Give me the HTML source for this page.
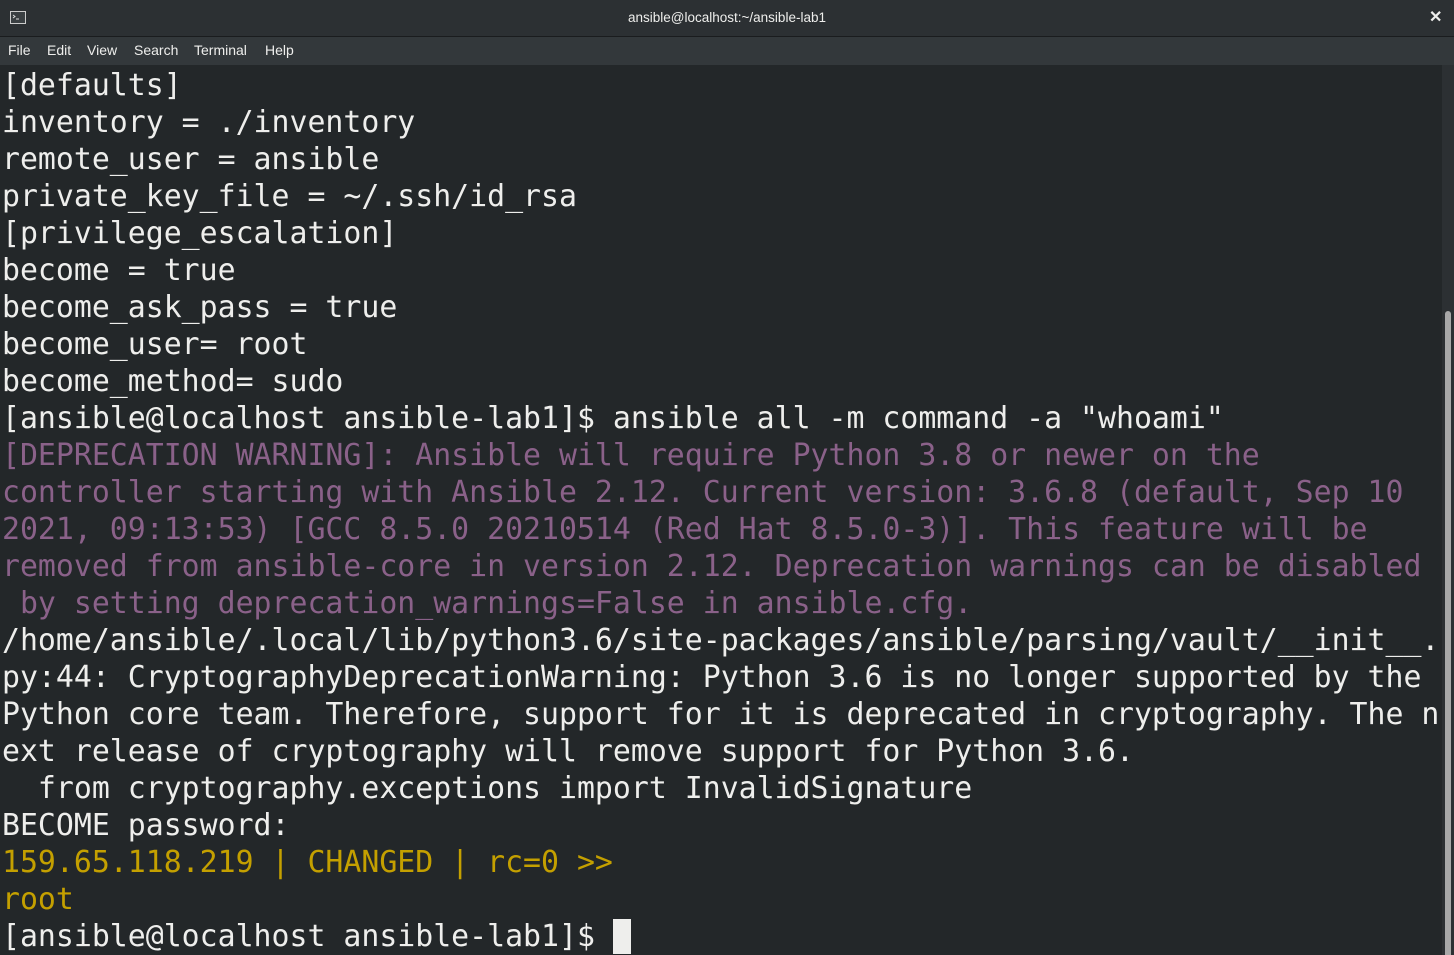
<!DOCTYPE html>
<html><head><meta charset="utf-8"><style>
html,body{margin:0;padding:0;width:1454px;height:955px;overflow:hidden;background:#232729;}
#title{position:absolute;left:0;top:0;width:1454px;height:36px;background:#2c3033;border-bottom:1px solid #1a1c1e;color:#eeeeec;font:13.5px "Liberation Sans",sans-serif;text-align:center;line-height:35px;}
#menu{position:absolute;left:0;top:37px;width:1454px;height:28px;background:#33383b;color:#eeeeec;font:14px "Liberation Sans",sans-serif;line-height:27px;}
#menu span{position:absolute;}
#term{position:absolute;left:2px;top:67px;width:1440px;font-family:"DejaVu Sans Mono",monospace;font-size:29.85px;line-height:37px;color:#eeeeec;white-space:pre;}
.p{color:#8a6189}.y{color:#c4a000}
#sb{position:absolute;left:1442px;top:65px;width:12px;height:890px;background:#2c3033;}
#thumb{position:absolute;left:1445px;top:311px;width:6px;height:644px;background:#a8a8a8;border-radius:3px 3px 0 0;}
#cur{display:inline-block;width:18px;height:35px;background:#eeeeec;vertical-align:top;margin-top:1px;}
</style></head><body>
<div id="title">ansible@localhost:~/ansible-lab1
<svg style="position:absolute;left:10px;top:11px" width="16" height="13" viewBox="0 0 16 13"><rect x="0.5" y="0.5" width="15" height="12" fill="#3a3f42" stroke="#ccc"/><path d="M3 4l2 1.5L3 7M6 8h3" stroke="#ddd" fill="none"/></svg>
<span style="position:absolute;left:1429px;top:0;font-size:16px;font-weight:bold">✕</span></div>
<div id="menu"><span style="left:8px">File</span><span style="left:47px">Edit</span><span style="left:87px">View</span><span style="left:134px">Search</span><span style="left:194px">Terminal</span><span style="left:265px">Help</span></div>
<div id="term">[defaults]
inventory = ./inventory
remote_user = ansible
private_key_file = ~/.ssh/id_rsa
[privilege_escalation]
become = true
become_ask_pass = true
become_user= root
become_method= sudo
[ansible@localhost ansible-lab1]$ ansible all -m command -a "whoami"
<span class="p">[DEPRECATION WARNING]: Ansible will require Python 3.8 or newer on the
controller starting with Ansible 2.12. Current version: 3.6.8 (default, Sep 10
2021, 09:13:53) [GCC 8.5.0 20210514 (Red Hat 8.5.0-3)]. This feature will be
removed from ansible-core in version 2.12. Deprecation warnings can be disabled
 by setting deprecation_warnings=False in ansible.cfg.</span>
/home/ansible/.local/lib/python3.6/site-packages/ansible/parsing/vault/__init__.
py:44: CryptographyDeprecationWarning: Python 3.6 is no longer supported by the
Python core team. Therefore, support for it is deprecated in cryptography. The n
ext release of cryptography will remove support for Python 3.6.
  from cryptography.exceptions import InvalidSignature
BECOME password:
<span class="y">159.65.118.219 | CHANGED | rc=0 &gt;&gt;
root</span>
[ansible@localhost ansible-lab1]$ <span id="cur"></span></div>
<div id="sb"></div><div id="thumb"></div>
</body></html>
